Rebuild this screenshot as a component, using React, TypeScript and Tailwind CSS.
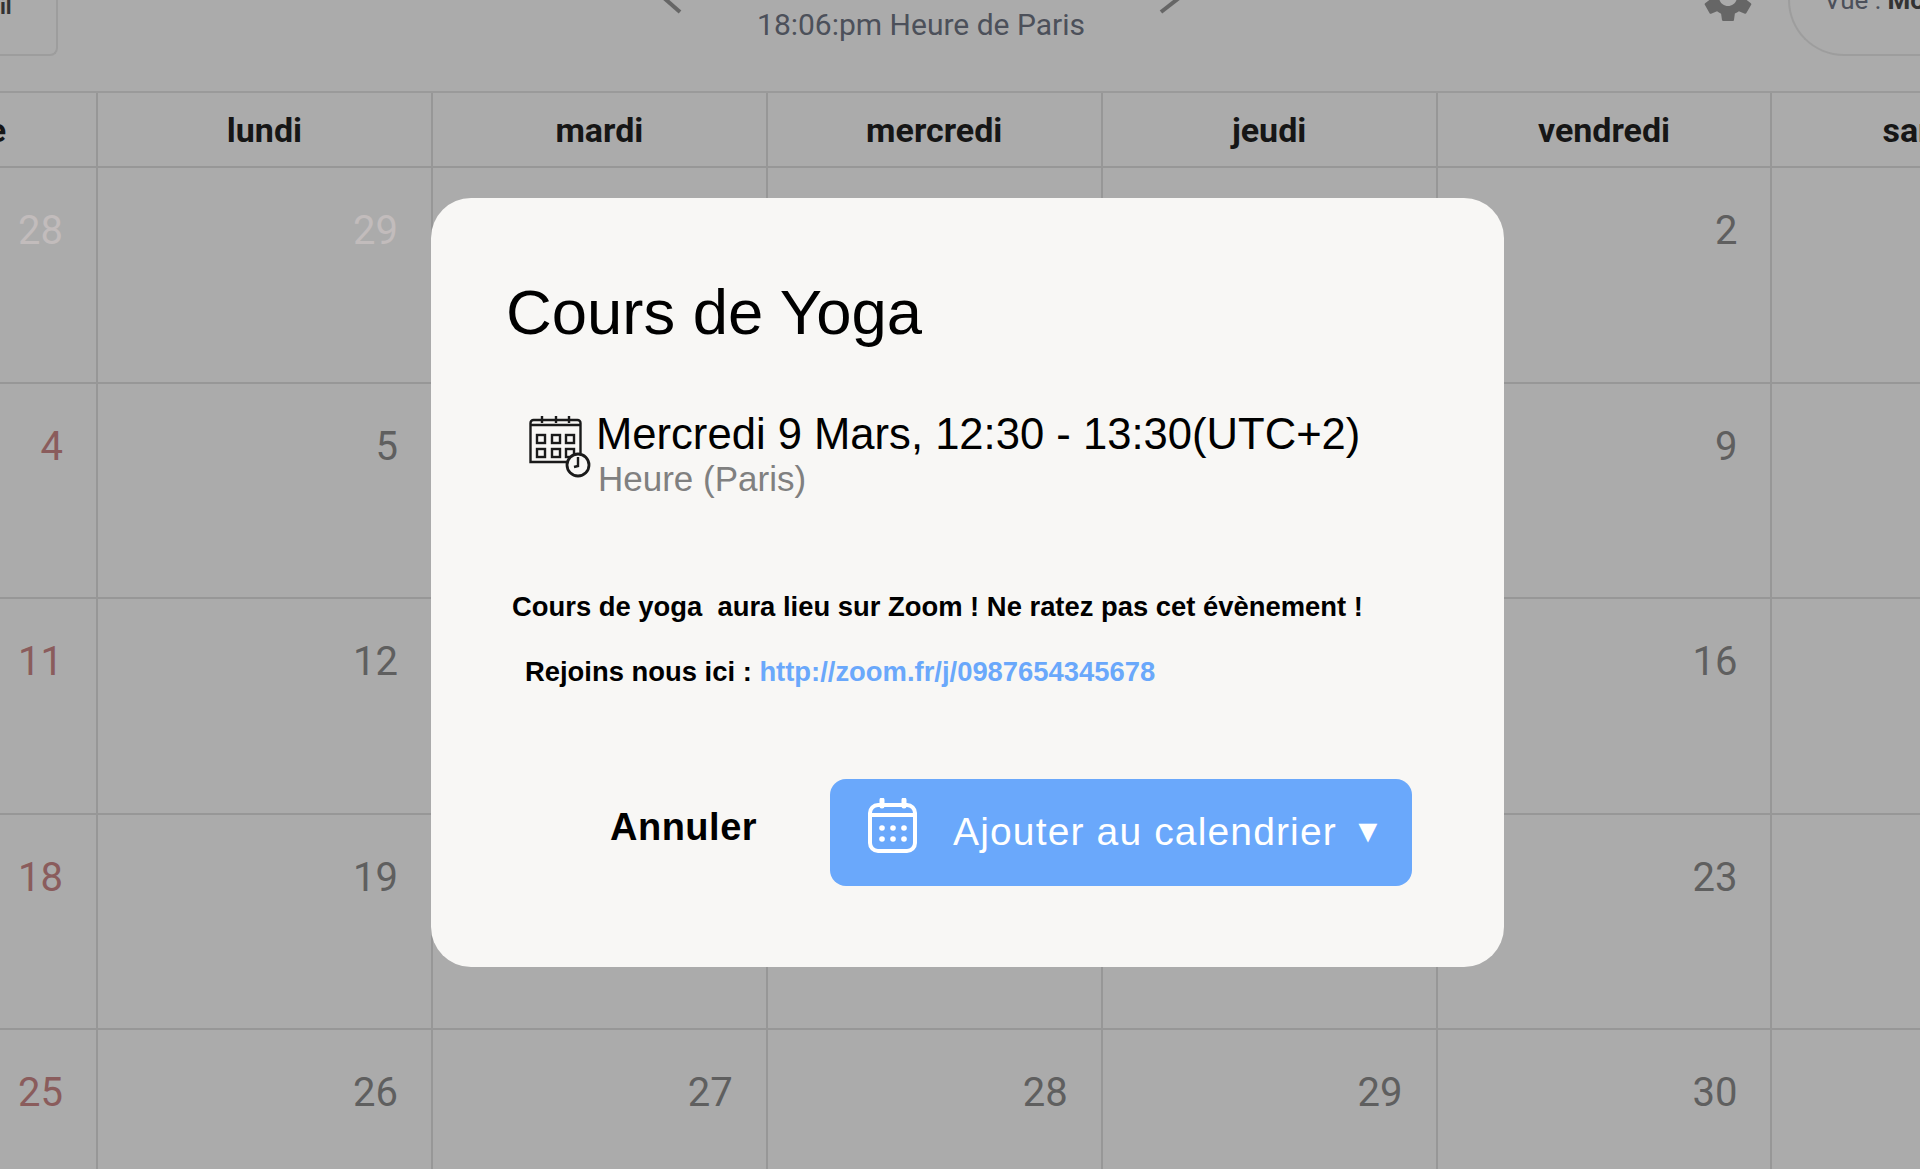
import { MdSettings } from "react-icons/md";

const days = ["lundi", "mardi", "mercredi", "jeudi", "vendredi"];

const weeks = [
  { sun: "28", rest: ["29", "", "", "", "2"], faded: true },
  { sun: "4", rest: ["5", "", "", "", "9"] },
  { sun: "11", rest: ["12", "", "", "", "16"] },
  { sun: "18", rest: ["19", "", "", "", "23"] },
  { sun: "25", rest: ["26", "27", "28", "29", "30"] },
];

function DayCell({ label, faded, red }: { label: string; faded?: boolean; red?: boolean }) {
  let color = "text-[#5f5f5f]";
  if (red) color = "text-[#8a5c5c]";
  if (faded) color = "text-[#c2bcbc]";
  return (
    <div className="h-[215.5px] border-r-2 border-b-2 border-[#979797] pr-[33px] pt-[41px] text-right">
      <span className={`text-[40px] leading-[44px] ${color}`}>{label}</span>
    </div>
  );
}

function CalendarClockIcon() {
  return (
    <svg viewBox="0 0 62 62" className="h-[62px] w-[62px] shrink-0" fill="none" stroke="#1a1a1a" strokeWidth="2.4">
      <path d="M40 46H1.5V7a3 3 0 0 1 3-3h44a3 3 0 0 1 3 3v30" />
      <path d="M1.5 9h50M13 0v7M27 0v7M40 0v7" />
      <rect x="8" y="19" width="8" height="8" />
      <rect x="23" y="19" width="8" height="8" />
      <rect x="37" y="19" width="8" height="8" />
      <rect x="8" y="33" width="8" height="8" />
      <rect x="23" y="33" width="8" height="8" />
      <rect x="37" y="33" width="8" height="8" />
      <circle cx="49" cy="49" r="11" fill="#f8f7f5" strokeWidth="2.8" />
      <path d="M49 41v9l-4 1" strokeWidth="2.4" />
    </svg>
  );
}

function ButtonCalendarIcon() {
  return (
    <svg viewBox="0 0 49 55" className="h-[55px] w-[49px] shrink-0" fill="none" stroke="white" strokeWidth="4">
      <rect x="2" y="7" width="45" height="46" rx="8" />
      <path d="M2 17h45" />
      <path d="M14 2v6M36 2v6" strokeLinecap="round" strokeWidth="5" />
      <g fill="white" stroke="none">
        <circle cx="14" cy="30" r="2.8" />
        <circle cx="25" cy="30" r="2.8" />
        <circle cx="36" cy="30" r="2.8" />
        <circle cx="14" cy="41" r="2.8" />
        <circle cx="25" cy="41" r="2.8" />
        <circle cx="36" cy="41" r="2.8" />
      </g>
    </svg>
  );
}

export default function App() {
  return (
    <div className="relative h-[1169px] w-[1920px] overflow-hidden bg-[#ababab] font-['Roboto',sans-serif]">
      {/* page behind the overlay */}
      <div className="flex h-[93px] items-start border-b-2 border-[#9a9a9a]">
        <div className="mt-[-20px] flex h-[76px] w-[58px] shrink-0 items-start rounded-br-lg border-r-2 border-b-2 border-[#9d9d9d] text-[22px] font-bold text-[#333]">
          <span className="pt-[10px]">il</span>
        </div>
        <svg viewBox="0 0 19 14" className="ml-[605px] h-[14px] w-[19px] shrink-0" fill="none" stroke="#666" strokeWidth="4">
          <path d="M1 -2L17 12" />
        </svg>
        <div className="ml-[74px] w-[330px] shrink-0 pt-[8px] text-center text-[30px] leading-[34px] text-[#4c505a]">
          18:06:pm Heure de Paris
        </div>
        <svg viewBox="0 0 22 14" className="ml-[72px] h-[14px] w-[22px] shrink-0" fill="none" stroke="#666" strokeWidth="4">
          <path d="M21 -2L3 12" />
        </svg>
        <div className="ml-[518px] mt-[-33px] h-[60px] w-[60px] shrink-0 text-[#666]">
          <MdSettings size={60} />
        </div>
        <div className="ml-[30px] mt-[-40px] h-[96px] flex-1 rounded-bl-[56px] border-b-2 border-l-2 border-[#9d9d9d] pl-[34px] pt-[21px] text-[26px] whitespace-nowrap text-[#4c505a]">
          Vue : <span className="font-bold text-[#333]">Mois</span>
        </div>
      </div>

      <div className="grid grid-cols-[98px_repeat(5,334.9px)_1fr]">
        <div className="flex h-[75px] items-center justify-end overflow-hidden border-r-2 border-b-2 border-[#979797] pt-[2px] pr-[90px] text-[34px] font-bold text-[#161616]">
          <span className="whitespace-nowrap">dimanche</span>
        </div>
        {days.map((d) => (
          <div key={d} className="flex h-[75px] items-center justify-center border-r-2 border-b-2 border-[#979797] pt-[2px] text-[34px] font-bold text-[#161616]">
            {d}
          </div>
        ))}
        <div className="flex h-[75px] items-center border-b-2 border-[#979797] pt-[2px] pl-[110px] text-[34px] font-bold whitespace-nowrap text-[#161616]">
          samedi
        </div>
        {weeks.map((w) => (
          <div key={w.sun} className="contents">
            <DayCell label={w.sun} red faded={w.faded} />
            {w.rest.map((r, i) => (
              <DayCell key={i} label={r} faded={w.faded && i === 0} />
            ))}
            <div className="h-[215.5px] border-b-2 border-[#979797]" />
          </div>
        ))}
      </div>

      {/* modal */}
      <div className="absolute top-[198px] left-[431px] h-[769px] w-[1073px] rounded-[40px] bg-[#f8f7f5] font-['Liberation_Sans',sans-serif] text-black">
        <h2 className="pl-[75px] pt-[77px] text-[63.4px] leading-[74px]">Cours de Yoga</h2>
        <div className="mt-[67px] ml-[98px] flex items-start">
          <CalendarClockIcon />
          <div className="ml-[5px] mt-[-7px]">
            <p className="text-[43.6px] leading-[50px] whitespace-nowrap">Mercredi 9 Mars, 12:30 - 13:30(UTC+2)</p>
            <p className="ml-[2px] pt-[1px] text-[35px] leading-[38px] text-[#808080]">Heure (Paris)</p>
          </div>
        </div>
        <p className="mt-[93px] ml-[81px] text-[27.4px] leading-[32px] font-bold whitespace-pre">Cours de yoga  aura lieu sur Zoom ! Ne ratez pas cet évènement !</p>
        <p className="mt-[33px] ml-[94px] text-[27.4px] leading-[32px] font-bold">
          Rejoins nous ici : <a className="text-[#6aa8fb]">http://zoom.fr/j/0987654345678</a>
        </p>
        <div className="mt-[91px] flex items-start">
          <button className="mt-[26px] ml-[179px] text-[38px] leading-[44px] font-bold tracking-[0.5px]">Annuler</button>
          <button className="ml-[73px] flex h-[107px] w-[582px] items-start rounded-[16px] bg-[#6aa8fb] pl-[38px] pt-[19px] text-white">
            <ButtonCalendarIcon />
            <span className="ml-[36px] mt-[12px] text-[39px] leading-[44px] tracking-[1.14px] whitespace-nowrap">Ajouter au calendrier</span>
            <span className="ml-[15px] mt-[13px] text-[32px] leading-[40px]">▼</span>
          </button>
        </div>
      </div>
    </div>
  );
}
